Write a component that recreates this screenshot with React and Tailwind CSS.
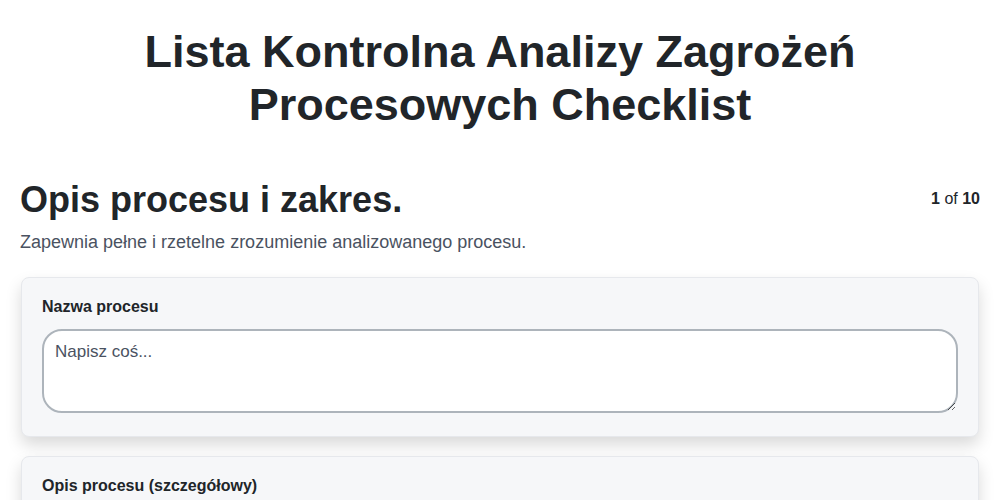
export default function App() {
  const fields = ["Nazwa procesu", "Opis procesu (szczegółowy)", "Zakres analizy"];

  return (
    <div className="min-h-screen bg-white px-5 pt-[25px] pb-10 text-[#212529] font-['Liberation_Sans',Arial,sans-serif]">
      <h1 className="mx-auto max-w-[780px] text-center text-[45px] font-bold leading-[53px]">
        Lista Kontrolna Analizy Zagrożeń Procesowych Checklist
      </h1>

      <div className="mt-[47px] flex items-start justify-between">
        <h2 className="text-[36px] font-bold leading-[1.2]">Opis procesu i zakres.</h2>
        <div className="pt-[9px] text-base leading-6">
          <span className="font-bold">1</span> of <span className="font-bold">10</span>
        </div>
      </div>
      <p className="mt-2 text-[18px] leading-[1.5] text-[#4a5261]">
        Zapewnia pełne i rzetelne zrozumienie analizowanego procesu.
      </p>

      <div className="mx-px mt-[21px] flex flex-col gap-[19px]">
        {fields.map((label) => (
          <div
            key={label}
            className="rounded-lg border border-[#e6e8ec] bg-[#f6f7f9] px-5 pt-5 pb-[23px] shadow-[0_8px_16px_rgba(0,0,0,0.15)]"
          >
            <label className="block text-base font-bold leading-[1.15]">{label}</label>
            <textarea
              placeholder="Napisz coś..."
              className="mt-3 block h-[84px] w-full rounded-[20px] border-2 border-[#adb4bb] bg-white px-[11px] pt-[11px] pb-2 text-[17px] leading-[1.15] placeholder:text-[#4a5261] outline-none"
            />
          </div>
        ))}
      </div>
    </div>
  );
}
